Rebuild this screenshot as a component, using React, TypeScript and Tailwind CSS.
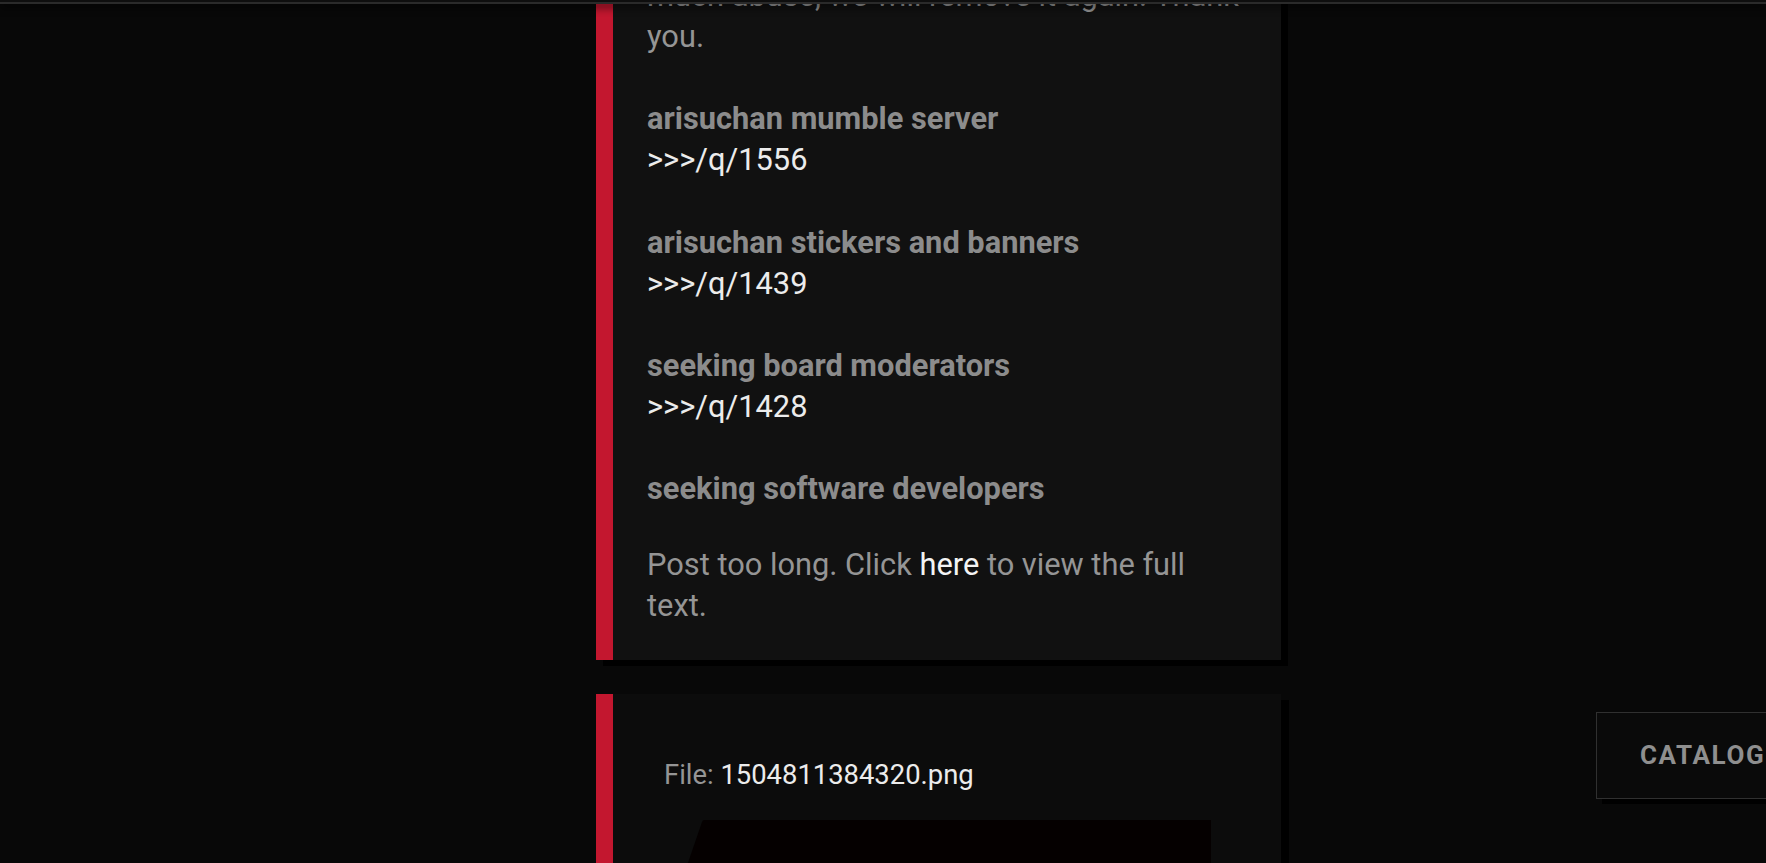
import React from "react";

const links = [
  { title: "arisuchan mumble server", ref: ">>>/q/1556" },
  { title: "arisuchan stickers and banners", ref: ">>>/q/1439" },
  { title: "seeking board moderators", ref: ">>>/q/1428" },
];

export default function App() {
  return (
    <div className="relative h-[863px] overflow-hidden bg-[#080808] font-['Roboto',sans-serif]">
      {/* fixed header edge */}
      <div className="absolute inset-x-0 top-0 z-20 h-[4px] border-b-2 border-[#2a2a2a] bg-[#0e0e0e] shadow-[0_3px_8px_rgba(0,0,0,0.85)]"></div>

      <main className="ml-[596px] -mt-[60px] flex w-[685px] flex-col gap-[34px]">
        {/* Post 1 */}
        <article className="flex bg-[#111111] shadow-[7px_6px_0_#000]">
          <div className="w-[17px] shrink-0 bg-[#c3172f]"></div>
          <div className="min-w-0 flex-1 px-[34px] pb-[34px] pt-[35px] text-[30.8px] leading-[41.1px] text-[#959595]">
            <p>much abuse, we will remove it again. Thank you.</p>
            {links.map((l) => (
              <div key={l.ref} className="mt-[41.1px]">
                <p className="font-bold text-[#8c8c8c]">{l.title}</p>
                <p className="text-[#ececec]">{l.ref}</p>
              </div>
            ))}
            <p className="mt-[41.1px] font-bold text-[#8c8c8c]">
              seeking software developers
            </p>
            <p className="mt-[35px]">
              Post too long. Click <span className="text-[#f4f4f4]">here</span>{" "}
              to view the full text.
            </p>
          </div>
        </article>

        {/* Post 2 */}
        <article className="flex bg-[#0c0c0c] shadow-[8px_6px_0_#000]">
          <div className="w-[17px] shrink-0 bg-[#c3172f]"></div>
          <div className="flex-1 pl-[51px] pt-[63px]">
            <p className="text-[27.4px] leading-[36px] text-[#959595]">
              File: <span className="text-[#ececec]">1504811384320.png</span>
            </p>
            <svg
              className="ml-[16px] mt-[27px] block"
              width="531"
              height="260"
              viewBox="0 0 531 260"
            >
              <path
                d="M24 0 L531 0 L531 260 L0 260 L0 66 L22 2 Q22.5 0 24 0 Z"
                fill="#050000"
              />
            </svg>
          </div>
        </article>
      </main>

      {/* floating catalog button */}
      <button className="absolute left-[1596px] top-[712px] z-10 flex h-[87px] items-center whitespace-nowrap border border-[#303030] bg-[#0a0a0a] px-[43px] text-[26px] font-bold tracking-[1.6px] text-[#8f8f8f] shadow-[6px_5px_0_#000]">
        CATALOG
      </button>
    </div>
  );
}
